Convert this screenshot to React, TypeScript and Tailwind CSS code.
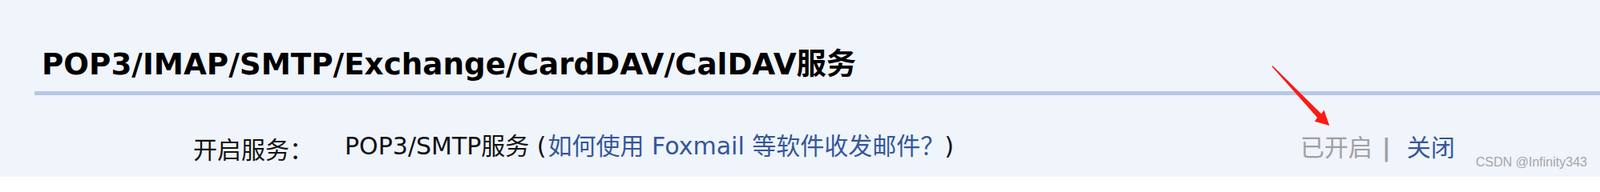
import React from "react";

export default function App() {
  return (
    <div
      className="relative w-[1996px] h-[221px] overflow-hidden bg-[#f0f4fb]"
      style={{ fontFamily: '"DejaVu Sans", "Noto Sans CJK SC", sans-serif' }}
    >
      <div className="pt-[58px] pl-[52px]">
        <h1 className="h-[44px] text-[37.3px] leading-[44px] font-bold text-black whitespace-nowrap">
          POP3/IMAP/SMTP/Exchange/CardDAV/CalDAV服务
        </h1>
      </div>
      <div className="mt-[12px] ml-[43px] h-[5px] bg-[#b4c8e8]" />
      <div className="mt-[44px] flex items-start pl-[241px] pr-[181px] text-[30px] leading-[40px] whitespace-nowrap">
        <div className="w-[189px] pt-[5px] text-[#111]">开启服务：</div>
        <div className="text-[#111]">
          POP3/SMTP服务 (<span className="ml-[2px] text-[#34579a]">如何使用 Foxmail 等软件收发邮件？</span>)
        </div>
        <div className="ml-auto flex items-start pt-[2px]">
          <span className="text-[#a0a0a0]">已开启</span>
          <span className="ml-[12px] font-bold text-[#a0a0a0]">|</span>
          <span className="ml-[20px] text-[#34579a]">关闭</span>
        </div>
      </div>
      <div
        className="absolute left-[1841px] top-[195px] text-[16px] leading-[16px] text-[#a6a6a6] whitespace-nowrap"
        style={{ fontFamily: '"Liberation Sans", Arial, sans-serif' }}
      >
        CSDN @Infinity343
      </div>
      <svg className="absolute left-0 top-0" width="1996" height="221" viewBox="0 0 1996 221">
        <polygon
          points="1586.5,83 1587.8,82.2 1648.3,142.3 1651.7,137.7 1658.5,157 1640,151.7 1643.3,147.1"
          fill="#ff1a12"
        />
      </svg>
    </div>
  );
}
